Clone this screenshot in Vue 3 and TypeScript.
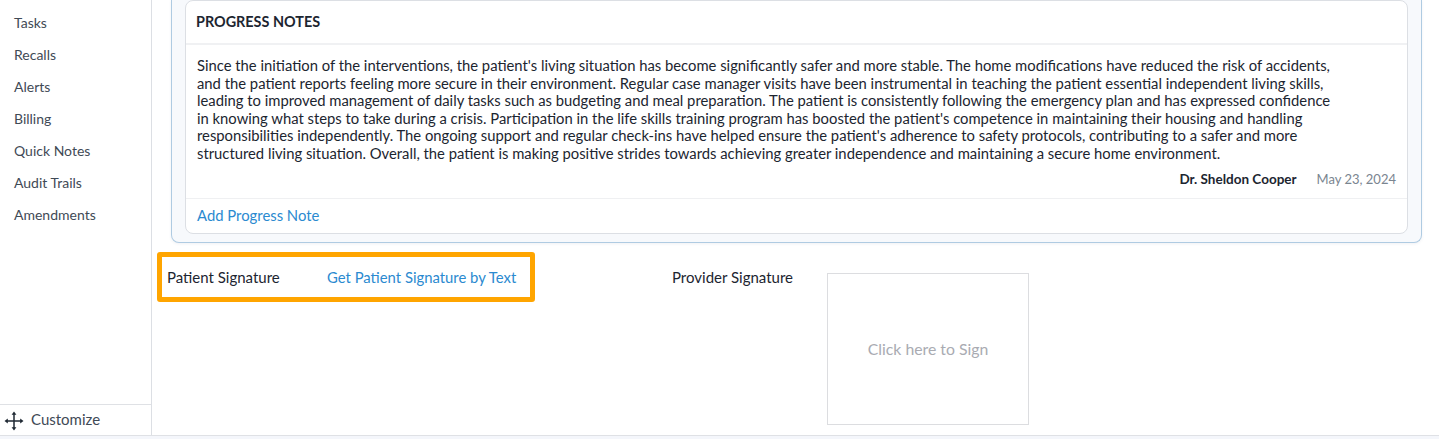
<template>
  <div class="page">
    <div class="content">
      <aside class="sidebar">
        <nav class="side-nav">
          <a v-for="item in navItems" :key="item" class="side-link">{{ item }}</a>
        </nav>
        <div class="customize">
          <svg class="move-icon" width="20" height="20" viewBox="0 0 20 20" fill="none">
            <path d="M10 2v16M2 10h16" stroke="#1f2933" stroke-width="1.5" />
            <path d="M10 .5 7.6 3.8h4.8zM10 19.5l-2.4-3.3h4.8zM.5 10l3.3-2.4v4.8zM19.5 10l-3.3-2.4v4.8z" fill="#1f2933" />
          </svg>
          <span>Customize</span>
        </div>
      </aside>

      <main class="main">
        <section class="outer-card">
          <div class="notes-card">
            <h2 class="notes-title">PROGRESS NOTES</h2>
            <div class="notes-body">
              <p class="note-text">{{ noteText }}</p>
              <div class="note-meta">
                <span class="note-author">Dr. Sheldon Cooper</span>
                <span class="note-date">May 23, 2024</span>
              </div>
            </div>
            <div class="notes-footer">
              <a class="link">Add Progress Note</a>
            </div>
          </div>
        </section>

        <section class="signatures">
          <div class="patient-signature">
            <span class="sig-label">Patient Signature</span>
            <a class="link">Get Patient Signature by Text</a>
          </div>
          <div class="provider-signature">
            <span class="sig-label">Provider Signature</span>
            <div class="sign-box">Click here to Sign</div>
          </div>
        </section>
      </main>
    </div>
    <div class="bottom-strip"></div>
  </div>
</template>

<script setup lang="ts">
const navItems: string[] = ['Tasks', 'Recalls', 'Alerts', 'Billing', 'Quick Notes', 'Audit Trails', 'Amendments']

const noteText =
  "Since the initiation of the interventions, the patient's living situation has become significantly safer and more stable. The home modifications have reduced the risk of accidents, and the patient reports feeling more secure in their environment. Regular case manager visits have been instrumental in teaching the patient essential independent living skills, leading to improved management of daily tasks such as budgeting and meal preparation. The patient is consistently following the emergency plan and has expressed confidence in knowing what steps to take during a crisis. Participation in the life skills training program has boosted the patient's competence in maintaining their housing and handling responsibilities independently. The ongoing support and regular check-ins have helped ensure the patient's adherence to safety protocols, contributing to a safer and more structured living situation. Overall, the patient is making positive strides towards achieving greater independence and maintaining a secure home environment."
</script>

<style>
html,
body {
  margin: 0;
  overflow: hidden;
  background: #fff;
}
</style>

<style scoped>
.page {
  width: 1439px;
  height: 439px;
  display: flex;
  flex-direction: column;
  overflow: hidden;
  font-family: Lato, "Liberation Sans", sans-serif;
  font-size: 14px;
  color: #1c2530;
}

.content {
  display: flex;
  height: 435px;
  flex: none;
}

.bottom-strip {
  flex: 1;
  background: #f4f6fb;
  border-top: 1px solid #dfe1e5;
}

.sidebar {
  width: 151px;
  flex: none;
  border-right: 1px solid #dcdfe4;
  display: flex;
  flex-direction: column;
  justify-content: space-between;
}

.side-nav {
  display: flex;
  flex-direction: column;
  padding-top: 7px;
}

.side-link {
  height: 32px;
  line-height: 32px;
  padding-left: 14px;
  color: #3f4a56;
}

.customize {
  height: 31px;
  border-top: 1px solid #dfe1e5;
  display: flex;
  align-items: center;
  gap: 7px;
  padding-left: 4px;
  padding-bottom: 2px;
  box-sizing: border-box;
  font-size: 15px;
  color: #3f4a56;
}

.move-icon {
  flex: none;
  margin-top: 3px;
}

.main {
  flex: 1;
  min-width: 0;
}

.outer-card {
  margin: 0 17px 0 19px;
  padding: 0 13px 8px;
  background: #f7f9fc;
  border: 1px solid #afcbe2;
  border-top: 0;
  border-radius: 0 0 8px 8px;
  box-shadow: 0 1px 3px rgba(60, 80, 110, 0.08);
}

.notes-card {
  background: #fff;
  border: 1px solid #dcdfe4;
  border-radius: 8px;
}

.notes-title {
  margin: 0;
  height: 42px;
  line-height: 42px;
  padding-left: 10px;
  font-size: 14.4px;
  font-weight: 700;
  color: #1c2530;
  border-bottom: 2px solid #f0f1f3;
}

.notes-body {
  padding: 12px 11px 0;
}

.note-text {
  margin: 0;
  width: 1138px;
  font-size: 14.8px;
  line-height: 17.6px;
  color: #1c2530;
}

.note-meta {
  display: flex;
  justify-content: flex-end;
  gap: 20px;
  margin-top: 7px;
  height: 18px;
  line-height: 18px;
}

.note-author {
  font-weight: 700;
  font-size: 13.5px;
}

.note-date {
  font-size: 13px;
  color: #7a8590;
}

.notes-footer {
  margin-top: 10px;
  height: 34px;
  line-height: 33px;
  padding-left: 11px;
  border-top: 1px solid #eff0f2;
}

.link {
  color: #2b8ad0;
  font-size: 14.85px;
  cursor: pointer;
}

.signatures {
  display: flex;
  align-items: flex-start;
  margin-left: 5px;
}

.patient-signature {
  width: 378px;
  height: 50px;
  box-sizing: border-box;
  margin-top: 9px;
  border: 5px solid #ffa500;
  border-radius: 3px;
  display: flex;
  align-items: center;
  padding-left: 5px;
  font-size: 15px;
}

.patient-signature .sig-label {
  width: 160px;
  flex: none;
}

.provider-signature {
  display: flex;
  align-items: flex-start;
  margin-left: 137px;
  margin-top: 30px;
  font-size: 15px;
}

.provider-signature .sig-label {
  width: 155px;
  flex: none;
  line-height: 18px;
  margin-top: -5px;
}

.sign-box {
  width: 202px;
  height: 152px;
  box-sizing: border-box;
  border: 1px solid #dcdde0;
  display: flex;
  align-items: center;
  justify-content: center;
  font-size: 15.8px;
  color: #a9abb2;
  cursor: pointer;
}
</style>
